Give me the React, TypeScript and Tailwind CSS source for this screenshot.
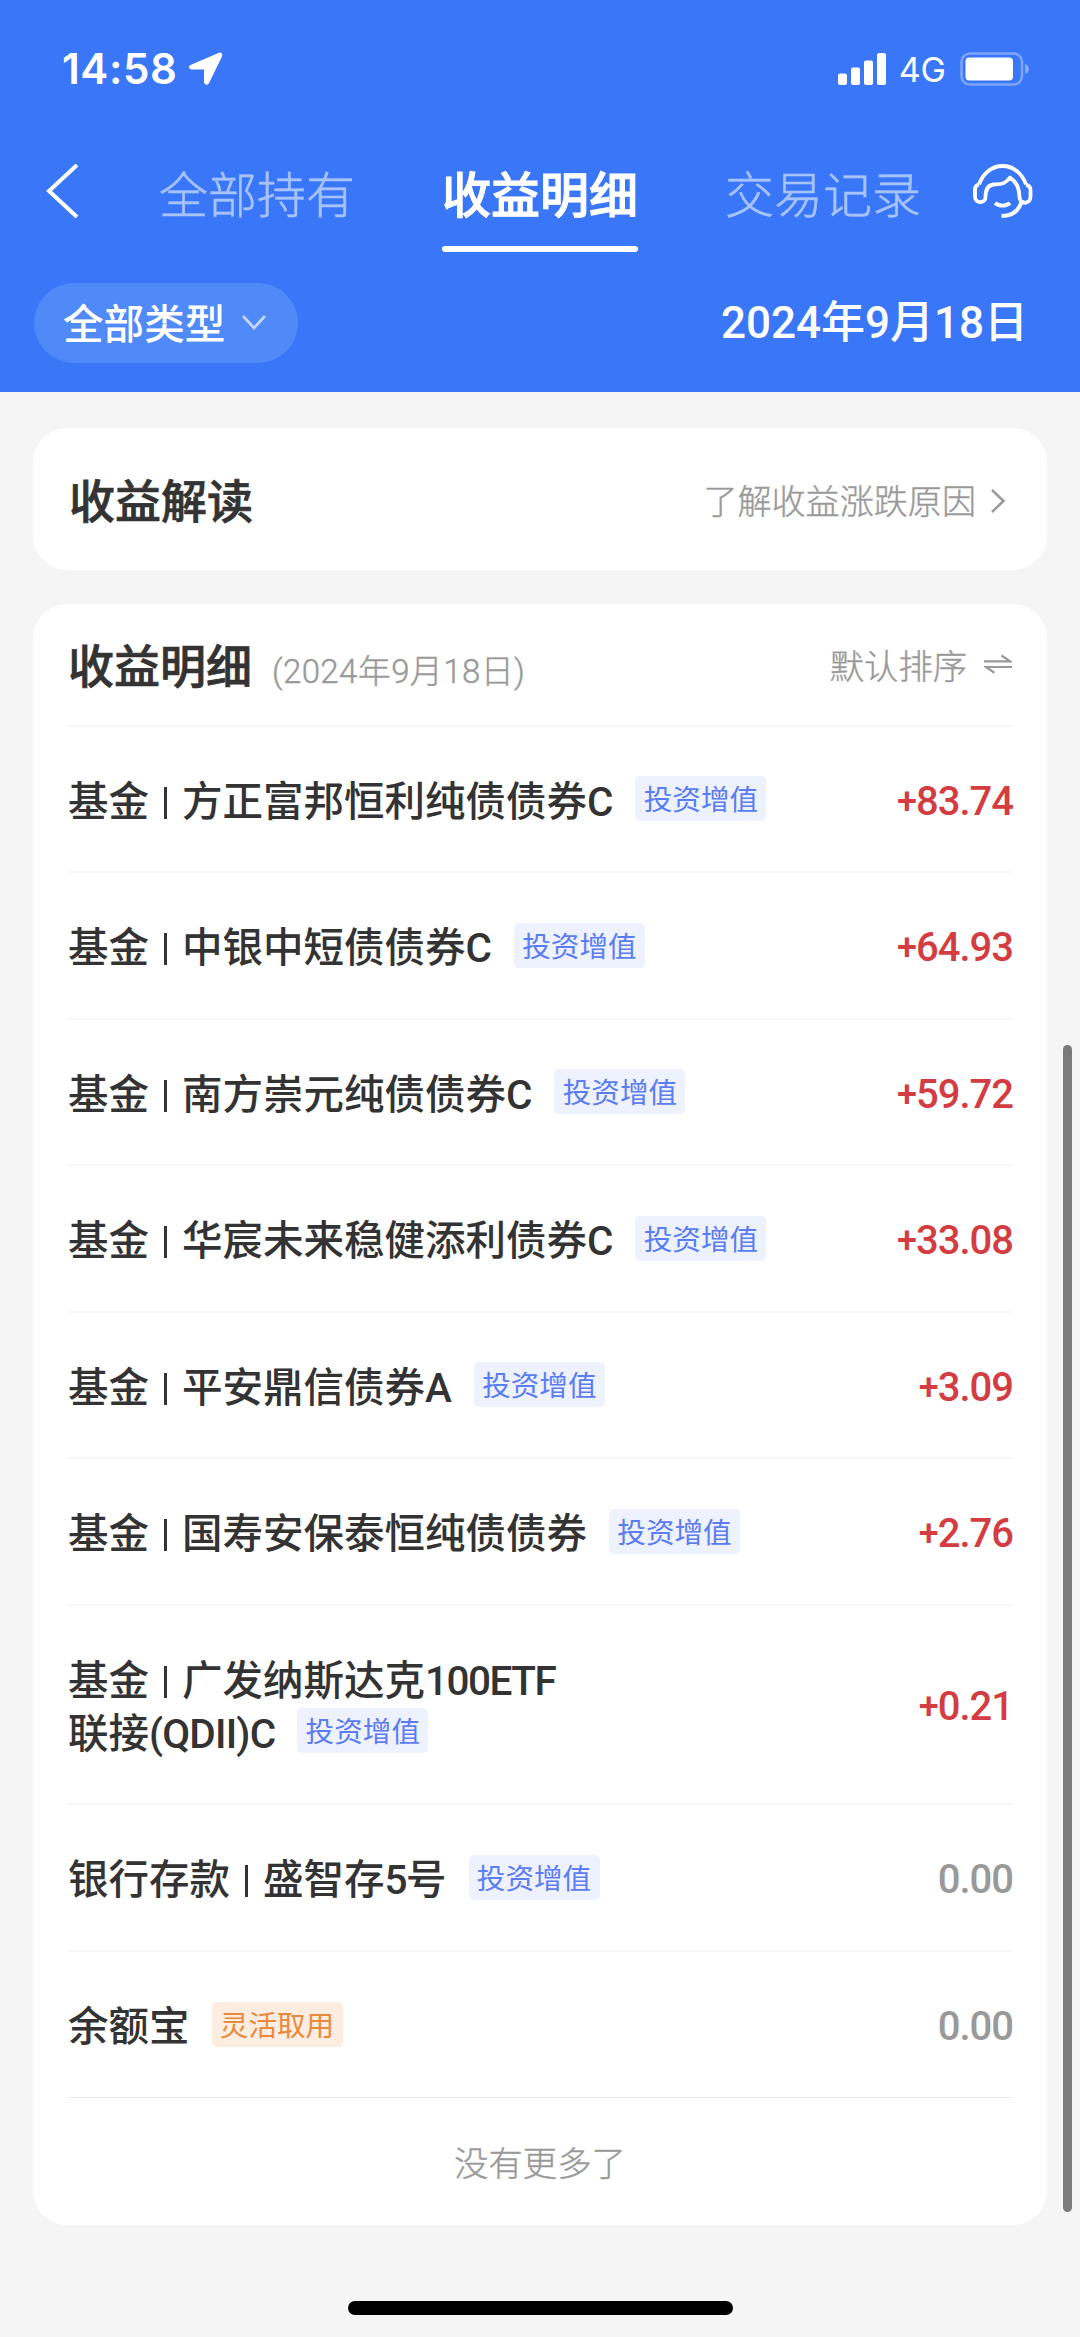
import type { ReactNode } from "react";

type Row = { lines: ReactNode[]; tag: string; warm?: boolean; amount: string };

const Bar = () => (
  <span className="mx-[15px] inline-block h-[32px] w-[3px] translate-y-[3px] bg-[#333333]" />
);

const L = ({ children }: { children: ReactNode }) => (
  <span className="tracking-[-1.5px]">{children}</span>
);

const fund = (name: string, suffix = "") => (
  <>
    基金
    <Bar />
    {name}
    {suffix.length > 1 ? <L>{suffix}</L> : suffix}
  </>
);

const rows: Row[] = [
  { lines: [fund("方正富邦恒利纯债债券", "C")], tag: "投资增值", amount: "+83.74" },
  { lines: [fund("中银中短债债券", "C")], tag: "投资增值", amount: "+64.93" },
  { lines: [fund("南方崇元纯债债券", "C")], tag: "投资增值", amount: "+59.72" },
  { lines: [fund("华宸未来稳健添利债券", "C")], tag: "投资增值", amount: "+33.08" },
  { lines: [fund("平安鼎信债券", "A")], tag: "投资增值", amount: "+3.09" },
  { lines: [fund("国寿安保泰恒纯债债券")], tag: "投资增值", amount: "+2.76" },
  {
    lines: [
      fund("广发纳斯达克", "100ETF"),
      <>
        联接<span className="tracking-[-0.8px]">(QDII)C</span>
      </>,
    ],
    tag: "投资增值",
    amount: "+0.21",
  },
  {
    lines: [
      <>
        银行存款
        <Bar />
        盛智存<L>5</L>号
      </>,
    ],
    tag: "投资增值",
    amount: "0.00",
  },
  { lines: ["余额宝"], tag: "灵活取用", warm: true, amount: "0.00" },
];

function Tag({ text, warm }: { text: string; warm?: boolean }) {
  return (
    <span
      className={
        "ml-[22px] flex h-[45px] w-[131px] items-center justify-center rounded-[5px] pt-[4px] text-[28.6px] font-normal " +
        (warm ? "bg-[#fcede0] text-[#e8893c]" : "bg-[#eef1fe] text-[#5b7cf3]")
      }
    >
      {text}
    </span>
  );
}

function Amount({ value }: { value: string }) {
  const gain = value.startsWith("+");
  return (
    <span
      className={
        "-mr-[1px] flex items-center pt-[6px] text-[40px] font-medium tracking-[-1px] " +
        (gain ? "text-[#d33d41]" : "text-[#999999]")
      }
    >
      {gain && <span className="text-[36px]">+</span>}
      {gain ? value.slice(1) : value}
    </span>
  );
}

function StatusBar() {
  return (
    <div className="flex h-[138px] items-center justify-between pr-[50px] pl-[62px]">
      <div className="flex items-center">
        <span className="font-['Inter'] text-[42px] font-semibold tracking-[0.6px]">14:58</span>
        <svg className="ml-[12px] h-[34px] w-[34px]" viewBox="0 0 34 34" fill="#fff">
          <path d="M30 .8 2 12.800c-3 1.400-2.400 4.600.8 4.600h12.200v12.400c0 3.200 3.800 4 5.200 1L33 4.400C34 2 32.200-.2 30 .8Z" />
        </svg>
      </div>
      <div className="flex items-center">
        <svg className="h-[32px] w-[48px]" viewBox="0 0 48 32" fill="#fff">
          <rect x="0" y="20.500" width="9" height="11.500" rx="2" />
          <rect x="13" y="14.500" width="9" height="17.500" rx="2" />
          <rect x="26" y="7.500" width="9" height="24.500" rx="2" />
          <rect x="39" y="0" width="9" height="32" rx="2" />
        </svg>
        <span className="ml-[13px] pt-[2px] font-['Inter'] text-[34px]">4G</span>
        <svg className="ml-[14px] h-[34px] w-[70px]" viewBox="0 0 70 34">
          <rect x="1.500" y="1.500" width="60.500" height="31" rx="8.500" fill="none" stroke="#fff" strokeOpacity=".35" strokeWidth="2.500" />
          <rect x="5.500" y="5.500" width="47.500" height="23" rx="4" fill="#fff" />
          <path d="M65 12c5 1 5 9 0 10Z" fill="#fff" fillOpacity=".4" />
        </svg>
      </div>
    </div>
  );
}

export default function App() {
  return (
    <div className="relative flex h-[2337px] w-[1080px] flex-col overflow-hidden bg-[#f5f5f5] font-['Roboto','Noto_Sans_CJK_SC',sans-serif] leading-none text-[#333333]">
      <header className="h-[392px] shrink-0 bg-[#3a76f8] text-white">
        <StatusBar />
        <nav className="flex h-[114px] items-start pl-[46px]">
          <svg className="mt-[26px] h-[54px] w-[34px]" viewBox="0 0 34 54" fill="none" stroke="#fff" strokeWidth="4">
            <path d="M31 1 3 27l28 26" />
          </svg>
          <span className="mt-[34px] ml-[79px] text-[49px] font-light text-[#a6c3fd] [-webkit-text-stroke:0.5px]">全部持有</span>
          <div className="ml-[87px] flex h-[114px] flex-col justify-between pt-[34px]">
            <span className="text-[49px] font-medium [-webkit-text-stroke:1px]">收益明细</span>
            <span className="h-[6px] rounded-full bg-white" />
          </div>
          <span className="mt-[34px] ml-[87px] text-[49px] font-light text-[#a6c3fd] [-webkit-text-stroke:0.5px]">交易记录</span>
          <svg className="mt-[26px] ml-[52px] h-[56px] w-[60px]" viewBox="0 0 60 56" fill="none" stroke="#fff" strokeWidth="3.800" strokeLinejoin="round">
            <path d="M6 20.500C10 9 19 2 29.500 2S49 9 53 20.500" />
            <path d="M6 20.500c-3 .5-4 2.500-4 5v7c0 7.500 10.500 7.500 10.500.5 0-7 2.500-12 8-12.500 7-.5 11.500 0 16.500-7 6 4.500 9 9 9.500 19.500 0 8 11 7.500 11-.5v-6.500c0-2.500-1-4.500-4.500-5" />
            <path d="M49 36c-2.500 10.500-10 16-20.500 16M22 39c4 3.500 11 3.500 15 0" />
          </svg>
        </nav>
        <div className="mt-[31px] flex h-[80px] items-center justify-between pr-[52px] pl-[34px]">
          <div className="flex h-[80px] w-[264px] items-center rounded-full bg-[#508af9] pl-[29px] text-[40.600px] font-medium">
            <span className="pt-[4px]">全部类型</span>
            <svg className="ml-[17px] h-[16px] w-[24px]" viewBox="0 0 24 16" fill="none" stroke="#c3d7fd" strokeWidth="2.800">
              <path d="m1 1 11 12L23 1" />
            </svg>
          </div>
          <span className="text-[44px] font-medium">2024年9月18日</span>
        </div>
      </header>

      <section className="mx-[33px] mt-[36px] flex h-[142px] shrink-0 items-center justify-between rounded-[34px] bg-white pr-[41px] pl-[36px]">
        <h2 className="pt-[6px] text-[46px] font-medium [-webkit-text-stroke:0.7px]">收益解读</h2>
        <div className="flex items-center text-[34.100px] font-light text-[#999999]">
          <span className="pt-[6px] [-webkit-text-stroke:0.4px]">了解收益涨跌原因</span>
          <svg className="mt-[3px] ml-[15px] h-[24px] w-[15px]" viewBox="0 0 15 24" fill="none" stroke="#999" strokeWidth="2.500">
            <path d="m1 1 11.500 11L1 23" />
          </svg>
        </div>
      </section>

      <section className="mx-[33px] mt-[34px] h-[1620.500px] shrink-0 rounded-[34px] bg-white px-[35px]">
        <div className="flex h-[122.500px] items-center border-b-2 border-[#f7f7f7]">
          <h2 className="pt-[6px] text-[46px] font-medium [-webkit-text-stroke:0.7px]">收益明细</h2>
          <span className="mt-[14px] ml-[20px] text-[33px] font-light tracking-[0.4px] text-[#999999] [-webkit-text-stroke:0.4px]">(2024年9月18日)</span>
          <span className="ml-auto pt-[6px] text-[34.300px] font-light text-[#999999] [-webkit-text-stroke:0.4px]">默认排序</span>
          <svg className="ml-[17px] h-[20px] w-[28px]" viewBox="0 0 28 20" fill="none" stroke="#999" strokeWidth="2.200">
            <path d="M0 7.300h26L17.500 1.500M28 13H2l8.500 5.800" />
          </svg>
        </div>
        {rows.map((row, i) => (
          <div
            key={i}
            className={
              "flex items-center justify-between " +
              (i === rows.length - 1 ? "border-b border-[#e9e9e9] " : "border-b-2 border-[#f7f7f7] ") +
              (row.lines.length > 1 ? "h-[199.500px]" : "h-[146.500px]")
            }
          >
            <div className="text-[40.500px] font-medium">
              {row.lines.map((line, j) => (
                <div key={j} className="flex h-[53px] items-center whitespace-nowrap">
                  <span className="pt-[6px]">{line}</span>
                  {j === row.lines.length - 1 && <Tag text={row.tag} warm={row.warm} />}
                </div>
              ))}
            </div>
            <Amount value={row.amount} />
          </div>
        ))}
        <p className="flex h-[127px] items-center justify-center pt-[6px] text-[34.300px] font-light text-[#999999] [-webkit-text-stroke:0.4px]">
          没有更多了
        </p>
      </section>

      <div className="absolute top-[1045px] left-[1063px] h-[1167px] w-[9px] rounded-full bg-[#7b7b7b]" />
      <div className="absolute top-[2301px] left-[348px] h-[14px] w-[385px] rounded-full bg-black" />
    </div>
  );
}
